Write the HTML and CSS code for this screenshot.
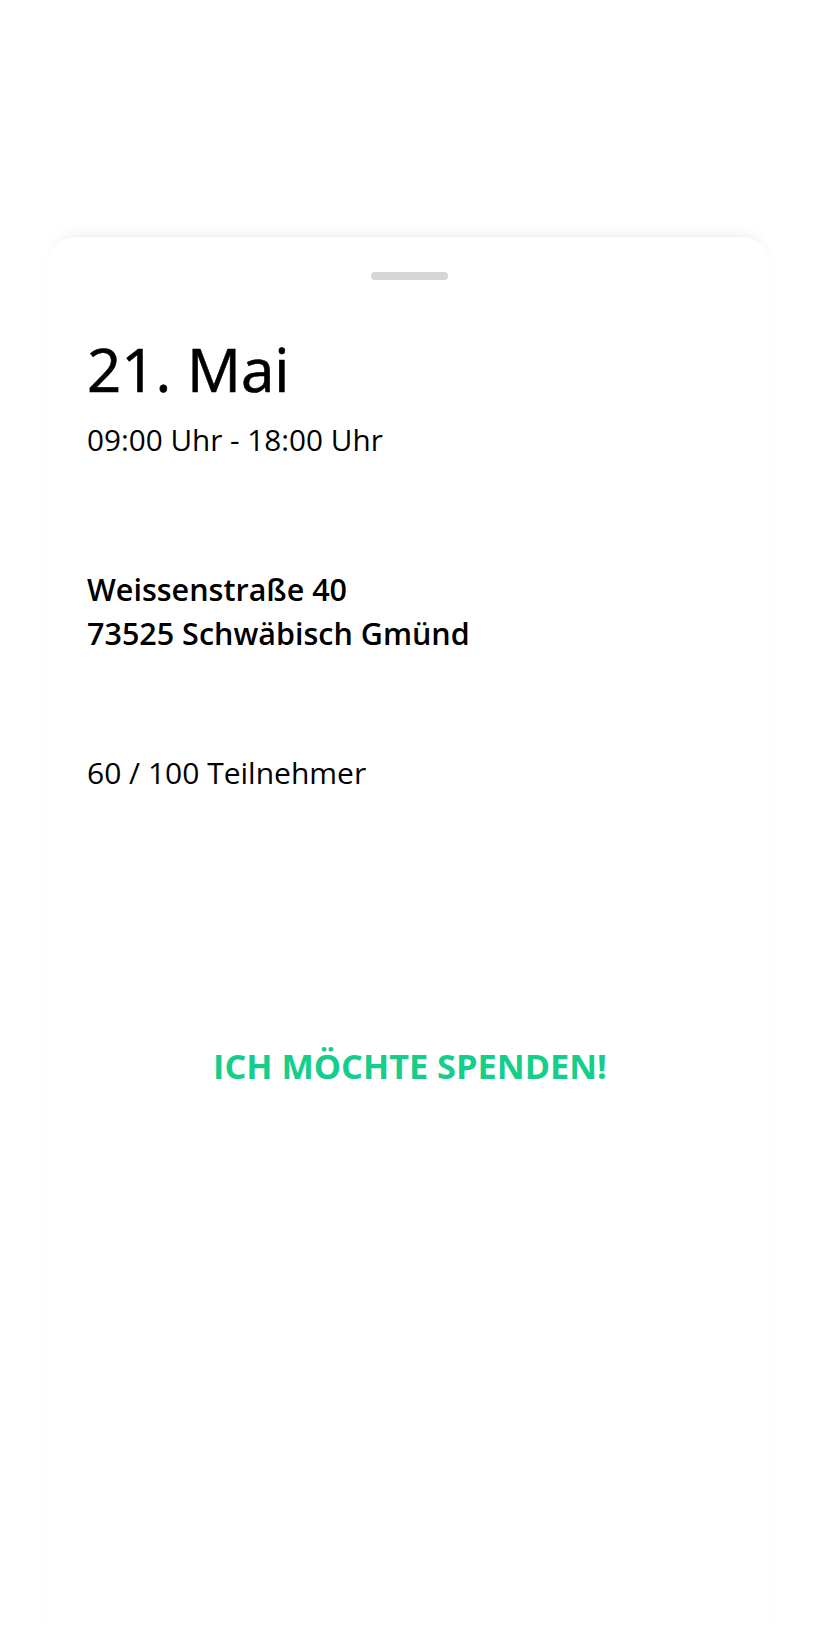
FILE: index.html
```html
<!DOCTYPE html>
<html lang="de">
<head>
<meta charset="utf-8">
<title>21. Mai</title>
<link rel="stylesheet" href="styles.css">
</head>
<body>
<main class="sheet">
  <div class="handle"></div>
  <section class="content">
    <h1 class="date">21. Mai</h1>
    <p class="time">09:00 Uhr - 18:00 Uhr</p>
    <p class="address">Weissenstraße 40<br>73525 Schwäbisch Gmünd</p>
    <p class="participants">60 / 100 Teilnehmer</p>
    <button class="donate" type="button">ICH MÖCHTE SPENDEN!</button>
  </section>
</main>
</body>
</html>
```
FILE: styles.css
```css
html, body {
  margin: 0;
  padding: 0;
  background: #ffffff;
}
body {
  font-family: "Open Sans", "Noto Sans", sans-serif;
  color: #000000;
  overflow: hidden;
}
.sheet {
  margin: 237px 44px 0 48px;
  height: 1411px;
  background: #ffffff;
  border-radius: 28px 28px 0 0;
  box-shadow: 0 -10px 14px -8px rgba(0, 0, 0, 0.08);
  padding-top: 35px;
  box-sizing: border-box;
}
.handle {
  width: 77px;
  height: 8px;
  border-radius: 4px;
  background: #d6d6d6;
  margin: 0 auto;
}
.content {
  padding: 0 37px 0 39px;
  display: flex;
  flex-direction: column;
}
.date {
  margin: 53px 0 0;
  font-size: 60px;
  line-height: 73px;
  font-weight: 400;
  -webkit-text-stroke: 0.7px #000000;
}
.time {
  margin: 14px 0 0;
  font-size: 29.7px;
  line-height: 40px;
  font-weight: 400;
}
.address {
  margin: 107px 0 0;
  font-size: 30.5px;
  line-height: 44px;
  font-weight: 600;
}
.participants {
  margin: 98px 0 0;
  font-size: 30px;
  line-height: 40px;
  font-weight: 400;
}
.donate {
  margin: 249px 0 0;
  padding: 0;
  border: 0;
  background: transparent;
  font-family: inherit;
  font-size: 34.3px;
  line-height: 48px;
  font-weight: 700;
  color: #16ce8c;
  text-align: center;
}
```
